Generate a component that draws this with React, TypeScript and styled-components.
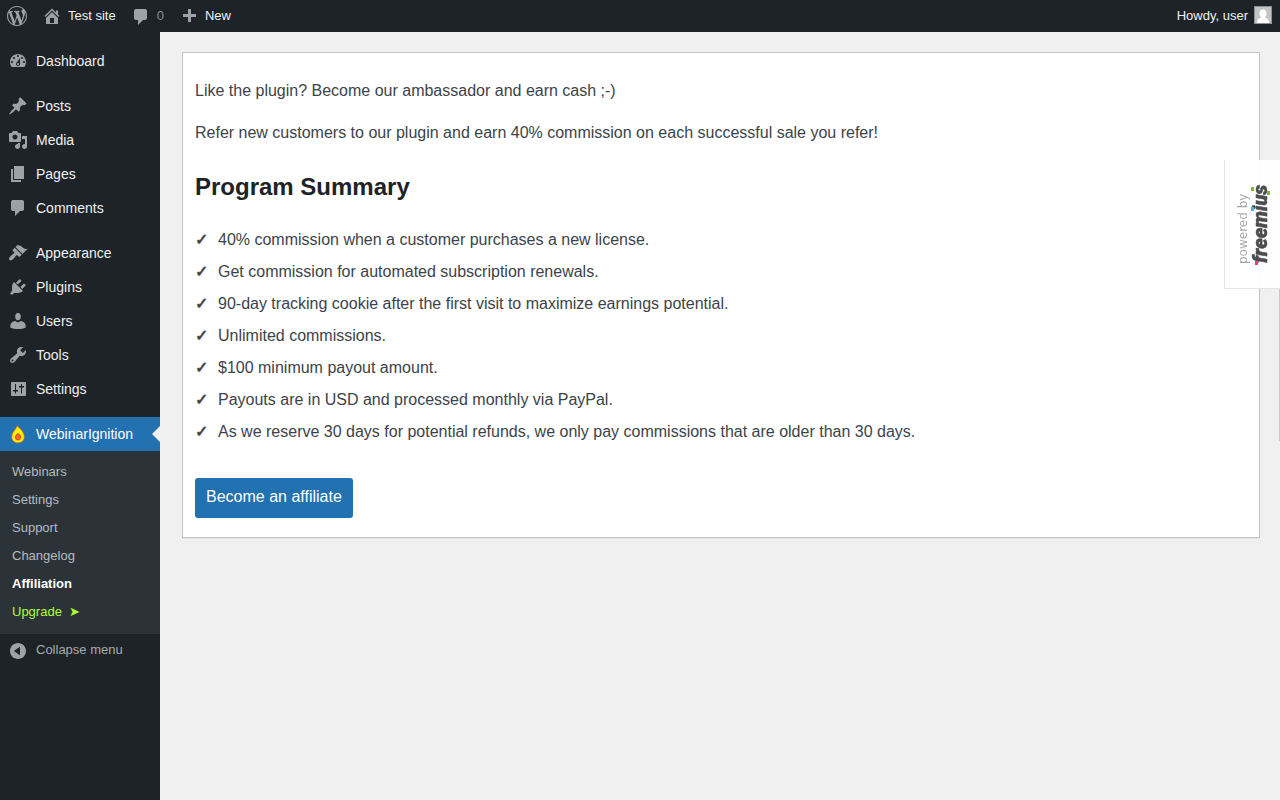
import React from 'react';
import styled, { createGlobalStyle } from 'styled-components';

const Global = createGlobalStyle`
  *, *::before, *::after { box-sizing: border-box; }
  body {
    margin: 0;
    background: #f0f0f1;
    color: #3c434a;
    font-family: "Liberation Sans", Arial, sans-serif;
    font-size: 13px;
    line-height: 18px;
  }
  ul { list-style: none; margin: 0; padding: 0; }
  a { text-decoration: none; color: inherit; }
`;

const icons = {
  wordpress:
    'M20 10c0-5.51-4.49-10-10-10C4.48 0 0 4.49 0 10c0 5.52 4.48 10 10 10 5.51 0 10-4.48 10-10zM7.78 15.37L4.37 6.22c.55-.02 1.17-.08 1.17-.08.5-.06.44-1.13-.06-1.11 0 0-1.45.11-2.37.11-.18 0-.37 0-.58-.01C4.12 2.69 6.87 1.11 10 1.11c2.33 0 4.45.87 6.05 2.34-.68-.11-1.65.39-1.65 1.58 0 .74.45 1.36.9 2.1.35.61.55 1.36.55 2.46 0 1.49-1.4 5-1.4 5l-3.03-8.37c.54-.02.82-.17.82-.17.5-.05.44-1.25-.06-1.22 0 0-1.44.12-2.38.12-.87 0-2.33-.12-2.33-.12-.5-.03-.56 1.2-.06 1.22l.92.08 1.26 3.41zM17.41 10c.24-.64.74-1.87.43-4.25.7 1.29 1.05 2.71 1.05 4.25 0 3.29-1.73 6.24-4.4 7.78.97-2.59 1.94-5.2 2.92-7.78zM6.1 18.09C3.12 16.65 1.11 13.53 1.11 10c0-1.3.23-2.48.72-3.59C3.25 10.3 4.67 14.2 6.1 18.09zm4.03-6.63l2.58 6.98c-.86.29-1.76.45-2.71.45-.79 0-1.57-.11-2.29-.33.81-2.38 1.62-4.74 2.42-7.1z',
  home: 'M16 8.5l1.53 1.53-1.06 1.06L10 4.6l-6.47 6.49-1.06-1.06L10 2.5l4 4v-2h2v4zm-6-2.46l6 5.99V18H4v-5.97zM12 17v-5H8v5h4z',
  comments:
    'M5 2h9c1.1 0 2 .9 2 2v7c0 1.1-.9 2-2 2h-2l-5 5v-5H5c-1.1 0-2-.9-2-2V4c0-1.1.9-2 2-2z',
  plus: 'M17 7v3h-5v5H9v-5H4V7h5V2h3v5h5z',
  dashboard:
    'M3.76 16h12.48c1.1-1.37 1.76-3.11 1.76-5 0-4.42-3.58-8-8-8s-8 3.58-8 8c0 1.89.66 3.63 1.76 5zM10 4c.55 0 1 .45 1 1s-.45 1-1 1-1-.45-1-1 .45-1 1-1zM6 6c.55 0 1 .45 1 1s-.45 1-1 1-1-.45-1-1 .45-1 1-1zm8 0c.55 0 1 .45 1 1s-.45 1-1 1-1-.45-1-1 .45-1 1-1zm-5.37 5.55L12 7v6c0 1.1-.9 2-2 2s-2-.9-2-2c0-.57.24-1.08.63-1.45zM4 10c.55 0 1 .45 1 1s-.45 1-1 1-1-.45-1-1 .45-1 1-1zm12 0c.55 0 1 .45 1 1s-.45 1-1 1-1-.45-1-1 .45-1 1-1zm-5 3c0-.55-.45-1-1-1s-1 .45-1 1 .45 1 1 1 1-.45 1-1z',
  posts:
    'M10.44 3.02l1.82-1.82 6.36 6.35-1.83 1.82c-1.05-.68-2.48-.57-3.41.36l-.75.75c-.92.93-1.04 2.35-.35 3.41l-1.83 1.82-2.41-2.41-2.8 2.79c-.42.42-3.38 2.71-3.8 2.29s1.86-3.39 2.28-3.81l2.79-2.79L4.1 9.36l1.83-1.82c1.05.69 2.48.57 3.4-.36l.75-.75c.93-.92 1.05-2.35.36-3.41z',
  media:
    'M13 11V4c0-.55-.45-1-1-1h-1.67L9 1H5L3.67 3H2c-.55 0-1 .45-1 1v7c0 .55.45 1 1 1h10c.55 0 1-.45 1-1zM7 4.5c1.38 0 2.5 1.12 2.5 2.5S8.38 9.5 7 9.5 4.5 8.38 4.5 7 5.62 4.5 7 4.5zM14 6h5v10.5c0 1.38-1.12 2.5-2.5 2.5S14 17.88 14 16.5s1.12-2.5 2.5-2.5c.17 0 .34.02.5.05V9h-3V6zm-4 8.05V13h2v3.5c0 1.38-1.12 2.5-2.5 2.5S7 17.88 7 16.5 8.12 14 9.5 14c.17 0 .34.02.5.05z',
  pages: 'M6 15V2h10v13H6zm-1 1h8v2H3V5h2v11z',
  appearance:
    'M14.48 11.06L7.41 3.99l1.5-1.5c.5-.56 2.3-.47 3.51.32 1.21.8 1.43 1.28 2.91 2.1 1.18.64 2.45 1.26 4.45.85zm-.71.71L6.7 4.7 4.93 6.47c-.39.39-.39 1.02 0 1.41l1.06 1.06c.39.39.39 1.03 0 1.42-.6.6-1.43 1.11-2.21 1.69-.35.26-.7.53-1.01.84C1.43 14.23.4 16.08 1.4 17.07c.99 1 2.84-.03 4.18-1.36.31-.31.58-.66.85-1.02.57-.78 1.08-1.61 1.69-2.21.39-.39 1.02-.39 1.41 0l1.06 1.06c.39.39 1.02.39 1.41 0z',
  plugins:
    'M13.11 4.36L9.87 7.6 8 5.73l3.24-3.24c.35-.34 1.05-.2 1.56.32.52.51.66 1.21.31 1.55zm-8 1.77l.91-1.12 9.01 9.01-1.19.84c-.71.71-2.63 1.16-3.82 1.16H6.14L4.9 17.26c-.59.59-1.54.59-2.12 0-.59-.58-.59-1.53 0-2.12l1.24-1.24v-3.88c0-1.13.4-3.19 1.09-3.89zm7.26 3.97l3.24-3.24c.34-.35 1.04-.21 1.55.31.52.51.66 1.21.31 1.55l-3.24 3.25z',
  users:
    'M10 9.3C8.2 9.3 7.2 7.5 7.2 5.5S8.2 2 10 2s2.8 1.5 2.8 3.5-1 3.8-2.8 3.8zM7.2 10L10 11.6l2.800-1.600c2.600.5 4.900 2 4.900 4.700v1.800c-2 1-5 1.600-7.700 1.600s-5.700-.6-7.700-1.600v-1.800C2.300 12 4.600 10.500 7.200 10z',
  tools:
    'M16.68 9.77c-1.34 1.34-3.3 1.67-4.95.99l-5.41 6.52c-.99.99-2.59.99-3.58 0s-.99-2.59 0-3.57l6.52-5.42c-.68-1.65-.35-3.61.99-4.95 1.28-1.28 3.12-1.62 4.72-1.06l-2.89 2.89 2.82 2.82 2.86-2.87c.53 1.58.18 3.39-1.08 4.65zM3.81 16.21c.4.39 1.04.39 1.43 0 .4-.4.4-1.04 0-1.43-.39-.4-1.03-.4-1.43 0-.39.39-.39 1.03 0 1.43z',
  settings:
    'M18 16V4c0-.55-.45-1-1-1H4c-.55 0-1 .45-1 1v12c0 .55.45 1 1 1h13c.55 0 1-.45 1-1zM7 5h1v6h2v1.500H8V14.500H7V12.500H5V11h2zM13 5h1v2h2v1.500h-2V14.500h-1V8.500h-2V7h2z',
  collapse: 'M10 2c4.42 0 8 3.58 8 8s-3.58 8-8 8-8-3.58-8-8 3.580-8 8-8zm2 12.300V5.700L5.800 10z',
};

type IconName = keyof typeof icons;

const IconSvg = styled.svg`
  flex: none;
  width: 20px;
  height: 20px;
  fill: #9ca2a7;
`;

const Icon = ({ name, lowered }: { name: IconName; lowered?: boolean }) => (
  <IconSvg viewBox={lowered ? '0 -1 20 20' : '0 0 20 20'} aria-hidden="true">
    <path d={icons[name]} fillRule="evenodd" />
  </IconSvg>
);

const Flame = () => (
  <IconSvg viewBox="0 0 20 20" aria-hidden="true">
    <path
      d="M9 2c3.500 2.500 7.200 6.500 7.200 10.800 0 3.800-2.600 6-6.200 6s-6.200-2.200-6.200-6C3.800 9.800 6 7 7.400 5.200 8.200 4.200 8.800 3 9 2z"
      fill="#fff200"
      stroke="#e0701c"
      strokeWidth="0.8"
    />
    <path
      d="M9.600 9c2.200.8 3.600 2.400 3.600 4.200 0 1.900-1.400 3.200-3.200 3.200s-3.200-1.300-3.200-3.200c0-1.700 1.600-2.800 2.800-4.200z"
      fill="#e8501c"
    />
    <circle cx="10" cy="13.300" r="1.200" fill="#c9301c" stroke="#ffa62e" strokeWidth="0.800" />
  </IconSvg>
);

const Bar = styled.header`
  display: flex;
  justify-content: space-between;
  height: 32px;
  background: #1d2327;
  color: #f0f0f1;
`;

const BarGroup = styled.nav`
  display: flex;
`;

const BarLink = styled.a<{ $muted?: boolean }>`
  display: flex;
  align-items: center;
  gap: 6px;
  padding: 0 8px 0 7px;
  color: ${(p) => (p.$muted ? '#8c8f94' : '#f0f0f1')};
`;

const Avatar = styled.svg`
  width: 18px;
  height: 18px;
  margin-bottom: 2px;
  border: 1px solid #8c8f94;
`;

const Shell = styled.div`
  display: flex;
  min-height: calc(100vh - 32px);
`;

const Sidebar = styled.nav`
  flex: none;
  width: 160px;
  padding-top: 12px;
  background: #1d2327;
`;

const MenuGroup = styled.ul`
  margin-bottom: 11px;
`;

const MenuLink = styled.a<{ $current?: boolean }>`
  position: relative;
  display: flex;
  align-items: center;
  gap: 8px;
  height: 34px;
  padding-left: 8px;
  font-size: 14px;
  color: ${(p) => (p.$current ? '#fff' : '#f0f0f1')};
  background: ${(p) => (p.$current ? '#2271b1' : 'transparent')};
`;

const Arrow = styled.span`
  position: absolute;
  right: 0;
  top: 9px;
  border: 8px solid transparent;
  border-left-width: 0;
  border-right-color: #f0f0f1;
`;

const SubMenu = styled.ul`
  padding: 7px 0 8px;
  background: #2c3338;
`;

const subColors = { plain: '#b5bbc0', current: '#fff', upgrade: '#adff2f' };

const SubLink = styled.a<{ $tone?: keyof typeof subColors }>`
  display: block;
  padding: 5px 12px;
  color: ${(p) => subColors[p.$tone ?? 'plain']};
  font-weight: ${(p) => (p.$tone === 'current' ? 600 : 400)};
`;

const Pointer = styled.span`
  margin-left: 7px;
`;

const Collapse = styled.button`
  display: flex;
  align-items: center;
  gap: 8px;
  width: 100%;
  height: 34px;
  padding: 0 8px;
  border: 0;
  background: none;
  color: #a7aaad;
  font: inherit;
`;

const CollapseLabel = styled.span`
  padding-bottom: 2px;
`;

const Content = styled.main`
  flex: 1;
  min-width: 0;
  padding: 20px 20px 20px 22px;
`;

const Card = styled.section`
  padding: 25px 12px 19px;
  border: 1px solid #c3c4c7;
  background: #fff;
  box-shadow: 0 1px 1px rgba(0, 0, 0, 0.04);
  font-size: 16px;
`;

const Lead = styled.p`
  margin: 0 0 16px;
  line-height: 26px;
`;

const Title = styled.h2`
  margin: 27px 0 26px;
  color: #1d2327;
  font-size: 24px;
  line-height: 28px;
`;

const Perk = styled.li`
  display: flex;
  gap: 9px;
  margin-bottom: 6px;
  line-height: 26px;
`;

const Tick = styled.span`
  width: 14px;
  font-weight: 700;
`;

const Button = styled.button`
  height: 40px;
  margin-top: 27px;
  padding: 0 11px 2px;
  border: 0;
  border-radius: 3px;
  background: #2271b1;
  color: #fff;
  font: inherit;
`;

const Badge = styled.a`
  position: fixed;
  top: 160px;
  right: 0;
  width: 56px;
  height: 129px;
  border: 1px solid #e5e5e5;
  border-width: 0 0 1px 1px;
  background: rgba(255, 255, 255, 0.9);
`;

const Edge = styled.div`
  position: fixed;
  top: 289px;
  right: 0;
  width: 1px;
  height: 152px;
  background: #c8c8c9;
`;

const BadgeArt = styled.svg`
  display: block;
  width: 55px;
  height: 128px;
`;

const groups: [string, IconName][][] = [
  [['Dashboard', 'dashboard']],
  [
    ['Posts', 'posts'],
    ['Media', 'media'],
    ['Pages', 'pages'],
    ['Comments', 'comments'],
  ],
  [
    ['Appearance', 'appearance'],
    ['Plugins', 'plugins'],
    ['Users', 'users'],
    ['Tools', 'tools'],
    ['Settings', 'settings'],
  ],
];

const perks = [
  '40% commission when a customer purchases a new license.',
  'Get commission for automated subscription renewals.',
  '90-day tracking cookie after the first visit to maximize earnings potential.',
  'Unlimited commissions.',
  '$100 minimum payout amount.',
  'Payouts are in USD and processed monthly via PayPal.',
  'As we reserve 30 days for potential refunds, we only pay commissions that are older than 30 days.',
];

export default function App() {
  return (
    <>
      <Global />
      <Bar>
        <BarGroup>
          <BarLink href="#" aria-label="About WordPress">
            <Icon name="wordpress" />
          </BarLink>
          <BarLink href="#">
            <Icon name="home" />
            Test site
          </BarLink>
          <BarLink href="#" $muted>
            <Icon name="comments" lowered />0
          </BarLink>
          <BarLink href="#">
            <Icon name="plus" lowered />
            New
          </BarLink>
        </BarGroup>
        <BarLink href="#">
          Howdy, user
          <Avatar viewBox="0 0 16 16" aria-hidden="true">
            <path d="M0 0h16v16H0z" fill="#c3c4c7" />
            <ellipse cx="8" cy="6.5" rx="3.5" ry="4" fill="#fff" />
            <path d="M2 16c0-3.5 1.5-4.5 4-5.5V9h4v1.500c2.500 1 4 2 4 5.500z" fill="#fff" />
          </Avatar>
        </BarLink>
      </Bar>
      <Shell>
        <Sidebar aria-label="Main menu">
          {groups.map((group) => (
            <MenuGroup key={group[0][0]}>
              {group.map(([label, icon]) => (
                <li key={label}>
                  <MenuLink href="#">
                    <Icon name={icon} />
                    {label}
                  </MenuLink>
                </li>
              ))}
            </MenuGroup>
          ))}
          <MenuLink href="#" $current>
            <Flame />
            WebinarIgnition
            <Arrow />
          </MenuLink>
          <SubMenu>
            {['Webinars', 'Settings', 'Support', 'Changelog'].map((label) => (
              <li key={label}>
                <SubLink href="#">{label}</SubLink>
              </li>
            ))}
            <li>
              <SubLink href="#" $tone="current" aria-current="page">
                Affiliation
              </SubLink>
            </li>
            <li>
              <SubLink href="#" $tone="upgrade">
                Upgrade<Pointer>➤</Pointer>
              </SubLink>
            </li>
          </SubMenu>
          <Collapse type="button">
            <Icon name="collapse" />
            <CollapseLabel>Collapse menu</CollapseLabel>
          </Collapse>
        </Sidebar>
        <Content>
          <Card>
            <Lead>Like the plugin? Become our ambassador and earn cash ;-)</Lead>
            <Lead>
              Refer new customers to our plugin and earn 40% commission on each successful sale you
              refer!
            </Lead>
            <Title>Program Summary</Title>
            <ul>
              {perks.map((perk) => (
                <Perk key={perk}>
                  <Tick>✓</Tick>
                  {perk}
                </Perk>
              ))}
            </ul>
            <Button type="button">Become an affiliate</Button>
          </Card>
        </Content>
      </Shell>
      <Badge href="#" aria-label="Powered by Freemius">
        <BadgeArt viewBox="0 0 55 128">
          <g transform="translate(0 128) rotate(-90)">
            <text x="24" y="22" fontSize="12" fill="#aaa" fontFamily="'DejaVu Sans', sans-serif">
              powered by
            </text>
            <text
              x="25"
              y="42"
              fontSize="20"
              fontWeight="900"
              fontStyle="italic"
              fontFamily="Roboto, sans-serif"
              fill="#4c4d4f"
              stroke="#4c4d4f"
              strokeWidth="0.5"
            >
              freemius
            </text>
            <path d="M23 30h4v3h-4z" fill="#ee3a77" />
            <path d="M77 26h4v3h-4z" fill="#3bb4e8" />
            <path d="M97 26h4v3h-4zM93 42h4v3h-4z" fill="#7fb926" />
          </g>
        </BadgeArt>
      </Badge>
      <Edge />
    </>
  );
}
